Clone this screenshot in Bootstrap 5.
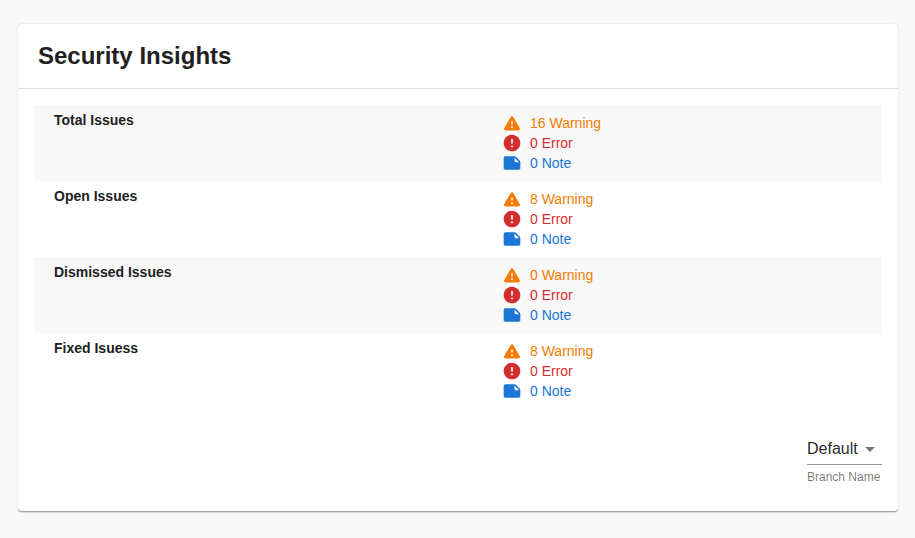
<!DOCTYPE html>
<html lang="en">
<head>
<meta charset="utf-8">
<title>Security Insights</title>
<link href="https://cdn.jsdelivr.net/npm/bootstrap@5.3.0/dist/css/bootstrap.min.css" rel="stylesheet">
<style>
body{background:#f8f8f8;font-family:"Liberation Sans",Arial,sans-serif;color:rgba(0,0,0,.87);padding:24px 17px 20px 18px}
.panel{height:488px;border:0;border-bottom:1px solid #a2a2a2;border-radius:4px;box-shadow:0 1px 1px rgba(0,0,0,.08),0 0 2px rgba(0,0,0,.16)}
.panel-head{height:65px;padding:16px 20px;border-bottom:1px solid #e0e0e0}
.panel-head h1{font-size:24px;line-height:32px;font-weight:700;color:#212121}
.panel-main{padding:16px 17px 0 16px}
.issue-row{height:76px;padding:8px 20px}
.issue-row:nth-child(odd){background:#f8f8f8}
.issue-name{width:448px;font-size:14px;line-height:14px;font-weight:700;color:#212121}
.issue-line{height:20px;font-size:14px;line-height:20px}
.issue-line svg{width:20px;height:20px;margin-right:8px;fill:currentColor}
.warn{color:#f57c00}.err{color:#d32f2f}.note{color:#1976d2}
.branch{width:75px;margin:23px -1px 0 0}
.branch-value{height:33px;padding-top:2px;border-bottom:1px solid #949494;font-size:16px;line-height:30px}
.branch-help{font-size:12px;line-height:20px;margin-top:2px;color:rgba(0,0,0,.54)}
</style>
<script src="https://cdn.jsdelivr.net/npm/bootstrap@5.3.0/dist/js/bootstrap.bundle.min.js"></script>
</head>
<body>
<svg class="d-none">
<symbol id="i-warn" viewBox="0 0 24 24"><path d="M4.470 21h15.060c1.540 0 2.500-1.670 1.730-3L13.730 4.990c-.77-1.330-2.690-1.330-3.460 0L2.740 18c-.77 1.330.19 3 1.730 3zM12 14c-.55 0-1-.45-1-1v-2c0-.55.45-1 1-1s1 .45 1 1v2c0 .55-.45 1-1 1zm1 4h-2v-2h2v2z"/></symbol>
<symbol id="i-err" viewBox="0 0 24 24"><path d="M12 2C6.480 2 2 6.480 2 12s4.480 10 10 10 10-4.480 10-10S17.520 2 12 2zm0 11c-.55 0-1-.45-1-1V8c0-.55.45-1 1-1s1 .45 1 1v4c0 .55-.45 1-1 1zm1 4h-2v-2h2v2z"/></symbol>
<symbol id="i-note" viewBox="0 0 24 24"><path d="M21.410 9.410l-4.830-4.830c-.37-.37-.88-.58-1.410-.58H4c-1.100 0-2 .9-2 2v12.010c0 1.100.89 1.990 1.990 1.990H20c1.100 0 2-.9 2-2v-7.170c0-.53-.21-1.040-.59-1.420zM15 5.500l5.500 5.500H16c-.55 0-1-.45-1-1V5.500z"/></symbol>
</svg>
<main class="card panel">
<header class="panel-head"><h1 class="m-0">Security Insights</h1></header>
<div class="panel-main d-flex flex-column">
<section>
<div class="issue-row d-flex"><div class="issue-name">Total Issues</div><div>
<div class="issue-line d-flex warn"><svg><use href="#i-warn"/></svg><span>16 Warning</span></div>
<div class="issue-line d-flex err"><svg><use href="#i-err"/></svg><span>0 Error</span></div>
<div class="issue-line d-flex note"><svg><use href="#i-note"/></svg><span>0 Note</span></div></div></div>
<div class="issue-row d-flex"><div class="issue-name">Open Issues</div><div>
<div class="issue-line d-flex warn"><svg><use href="#i-warn"/></svg><span>8 Warning</span></div>
<div class="issue-line d-flex err"><svg><use href="#i-err"/></svg><span>0 Error</span></div>
<div class="issue-line d-flex note"><svg><use href="#i-note"/></svg><span>0 Note</span></div></div></div>
<div class="issue-row d-flex"><div class="issue-name">Dismissed Issues</div><div>
<div class="issue-line d-flex warn"><svg><use href="#i-warn"/></svg><span>0 Warning</span></div>
<div class="issue-line d-flex err"><svg><use href="#i-err"/></svg><span>0 Error</span></div>
<div class="issue-line d-flex note"><svg><use href="#i-note"/></svg><span>0 Note</span></div></div></div>
<div class="issue-row d-flex"><div class="issue-name">Fixed Isuess</div><div>
<div class="issue-line d-flex warn"><svg><use href="#i-warn"/></svg><span>8 Warning</span></div>
<div class="issue-line d-flex err"><svg><use href="#i-err"/></svg><span>0 Error</span></div>
<div class="issue-line d-flex note"><svg><use href="#i-note"/></svg><span>0 Note</span></div></div></div>
</section>
<div class="branch align-self-end">
<div class="branch-value d-flex justify-content-between align-items-center"><span>Default</span><svg width="24" height="24" viewBox="0 0 24 24" fill="#757575"><path d="M7 10l5 5 5-5z"/></svg></div>
<div class="branch-help text-nowrap">Branch Name</div>
</div>
</div>
</main>
</body>
</html>
